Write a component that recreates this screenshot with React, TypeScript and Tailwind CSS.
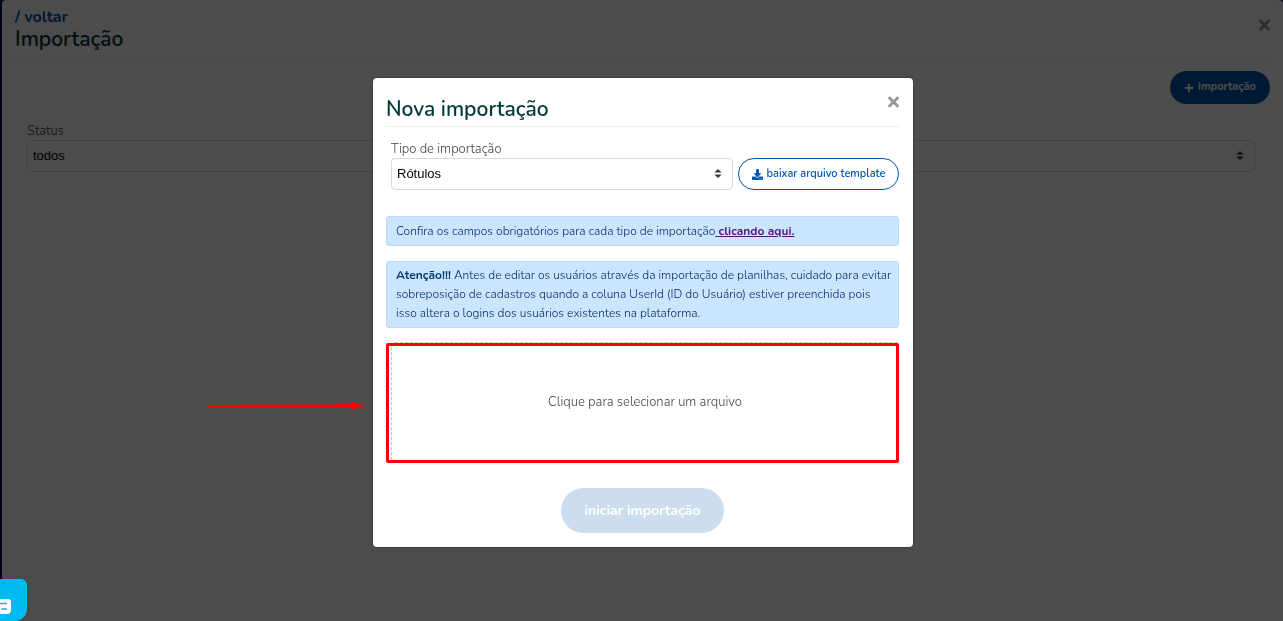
import React from "react";
import { FaDownload, FaPlus, FaTimes } from "react-icons/fa";

type SelectProps = { id: string; label: string; options: string[] };

function SelectField({ id, label, options }: SelectProps) {
  return (
    <div className="flex min-w-0 flex-1 flex-col">
      <label htmlFor={id} className="text-[13px] leading-[18px] font-light text-[#444444]">
        {label}
      </label>
      <div className="relative">
        <select
          id={id}
          className="block h-8 w-full appearance-none rounded border border-[#d9d9d9] bg-white px-[5px] font-['Liberation_Sans',Arial,sans-serif] text-[13px] text-black"
        >
          {options.map((o) => (
            <option key={o}>{o}</option>
          ))}
        </select>
        <svg
          viewBox="0 0 4 5"
          className="pointer-events-none absolute top-[11px] right-[11px] h-[9px] w-2"
          fill="#343a40"
          aria-hidden="true"
        >
          <path d="M2 0L0 2h4zm0 5L0 3h4z" />
        </svg>
      </div>
    </div>
  );
}

function CloseButton() {
  return (
    <button type="button" aria-label="Fechar" className="text-[#999999]">
      <FaTimes className="h-4 w-[11px]" />
    </button>
  );
}

function ImportPage() {
  return (
    <main className="min-h-screen rounded-t bg-white px-[13px]">
      <header className="flex items-start justify-between border-b border-[#eeeeee] pt-[6px] pb-[7px]">
        <div>
          <a href="#voltar" className="block text-base leading-[22px] font-bold text-[#0057b2]">
            / voltar
          </a>
          <h1 className="text-[21px] leading-[22px] font-semibold text-[#003b3b]">Importação</h1>
        </div>
        <div className="pt-[10px]">
          <CloseButton />
        </div>
      </header>
      <div className="flex justify-end pt-[13px]">
        <button
          type="button"
          className="flex h-[33px] w-[100px] items-center justify-center gap-1 rounded-full bg-[#0057b2] text-[11px] font-bold text-white"
        >
          <FaPlus className="text-[10px]" />
          importação
        </button>
      </div>
      <div className="flex pt-[18px] pr-[15px] pl-3">
        <SelectField id="status" label="Status" options={["todos"]} />
      </div>
    </main>
  );
}

function ImportDialog() {
  return (
    <section
      role="dialog"
      aria-modal="true"
      aria-labelledby="dialog-title"
      className="relative w-[540px] rounded bg-white pt-4 pr-[14px] pb-[14px] pl-[13px] shadow-[0_0_2px_rgba(0,0,0,0.6)]"
    >
      <header className="flex items-start justify-between border-b border-[#eeeeee] pb-[2px]">
        <h2
          id="dialog-title"
          className="text-[21px] leading-[30px] font-semibold text-[#003b3b]"
        >
          Nova importação
        </h2>
        <CloseButton />
      </header>

      <div className="flex items-end gap-[5px] pt-[13px] pl-[5px]">
        <SelectField id="tipo" label="Tipo de importação" options={["Rótulos"]} />
        <button
          type="button"
          className="flex h-8 w-[161px] items-center justify-center gap-1 rounded-full border border-[#0057b2] text-[11px] font-semibold text-[#0057b2]"
        >
          <FaDownload className="text-[11px]" />
          baixar arquivo template
        </button>
      </div>

      <p className="mt-[26px] rounded-[3px] border border-[#b8daff] bg-[#cce5ff] px-[9px] py-[5px] text-[12px] leading-[18px] font-light text-[#002a66]">
        Confira os campos obrigatórios para cada tipo de importação
        <a href="#campos" className="font-bold text-[#4b1882] underline">
          {" "}clicando aqui.
        </a>
      </p>

      <p className="mt-[15px] rounded-[3px] border border-[#b8daff] bg-[#cce5ff] py-1 pr-[5px] pl-[9px] text-[12px] leading-[19px] font-light text-[#002a66]">
        <strong className="font-bold text-[#003b72]">Atenção!!!</strong> Antes de editar os usuários
        através da importação de planilhas, cuidado para evitar sobreposição de cadastros quando a
        coluna UserId (ID do Usuário) estiver preenchida pois isso altera o logins dos usuários
        existentes na plataforma.
      </p>

      <div className="relative mt-[14px] pl-[5px]">
        <button
          type="button"
          className="h-[120px] w-full rounded border border-dashed border-[#c4c4c4] pt-[2px] text-[13px] font-light text-[#444444]"
        >
          Clique para selecionar um arquivo
        </button>
        <div className="pointer-events-none absolute inset-x-0 top-px h-[120px] rounded-[2px] border-3 border-[#ff0000]" />
        <svg
          viewBox="0 0 158 10"
          className="absolute top-[59px] right-full mr-[21px] h-[10px] w-[158px]"
          aria-hidden="true"
        >
          <path d="M2 5.5L146 4.8" stroke="#ff0000" strokeWidth="3" strokeLinecap="round" />
          <path d="M144 0.5L158 4.8L144 9Z" fill="#ff0000" />
        </svg>
      </div>

      <div className="flex justify-center pt-[26px]">
        <button
          type="button"
          disabled
          className="h-[45px] w-[163px] rounded-full bg-[#ccddef] text-[14px] font-bold text-white"
        >
          iniciar importação
        </button>
      </div>
    </section>
  );
}

export default function App() {
  return (
    <div className="min-h-screen bg-[#001a3d] pl-[2px] font-[Nunito,Lato,sans-serif]">
      <ImportPage />
      <div className="fixed inset-0 flex items-start justify-center overflow-auto bg-black/70 pt-[78px] pl-[3px]">
        <ImportDialog />
      </div>
      <button
        type="button"
        aria-label="Chat"
        className="fixed bottom-0 left-0 h-[42px] w-[27px] rounded-tr-md rounded-br-xl bg-[#00bbf2] shadow-md"
      >
        <svg viewBox="0 0 27 42" className="h-[42px] w-[27px]" fill="none" aria-hidden="true">
          <path d="M0 20H8Q11 20 11 23V31Q11 35 7 35H0Z" fill="#ffffff" />
          <path d="M0 24.500H7M1.500 30H7" stroke="#00bbf2" strokeWidth="1.500" />
        </svg>
      </button>
    </div>
  );
}
